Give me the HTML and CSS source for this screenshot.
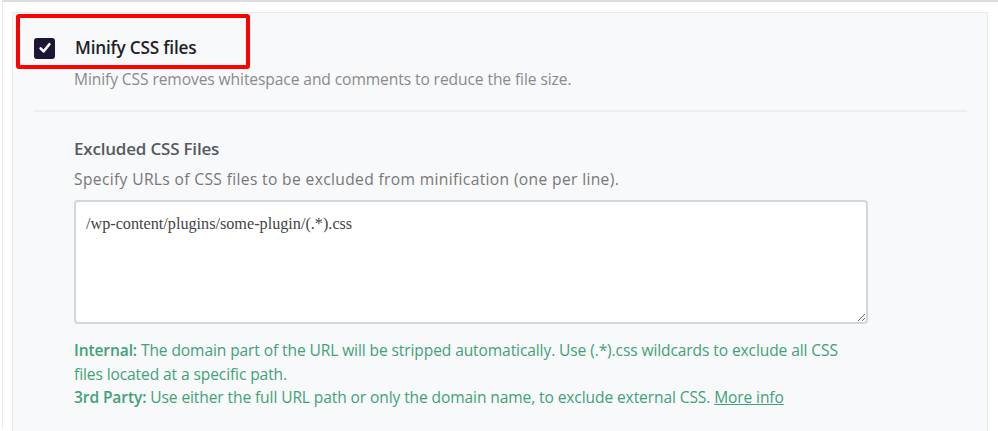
FILE: index.html
```html
<!DOCTYPE html>
<html>
<head>
<meta charset="utf-8">
<link rel="stylesheet" href="styles.css">
</head>
<body>
<div class="page">
  <div class="panel">
    <div class="option">
      <span class="check">
        <svg width="14" height="14" viewBox="0 0 14 14"><path d="M2.6 7.4 L5.6 10.4 L11.4 3.2" fill="none" stroke="#fff" stroke-width="2.6" stroke-linecap="round" stroke-linejoin="round"/></svg>
      </span>
      <span class="option-title">Minify CSS files</span>
    </div>
    <p class="option-desc">Minify CSS removes whitespace and comments to reduce the file size.</p>
    <div class="divider"></div>
    <div class="sub">
      <h3 class="sub-title">Excluded CSS Files</h3>
      <p class="sub-desc">Specify URLs of CSS files to be excluded from minification (one per line).</p>
      <textarea class="field">/wp-content/plugins/some-plugin/(.*).css</textarea>
      <div class="hint">
        <p><b>Internal:</b> The domain part of the URL will be stripped automatically. Use (.*).css wildcards to exclude all CSS files located at a specific path.</p>
        <p><b>3rd Party:</b> Use either the full URL path or only the domain name, to exclude external CSS. <a href="#">More info</a></p>
      </div>
    </div>
    <div class="highlight"></div>
  </div>
</div>
</body>
</html>
```

FILE: styles.css
```css
html, body {
  margin: 0;
  padding: 0;
  background: #ffffff;
}
body {
  font-family: "Open Sans", "Noto Sans", sans-serif;
  width: 998px;
  height: 431px;
  overflow: hidden;
}
.page {
  border-top: 2px solid #dcdcdc;
  border-left: 1px solid #ececec;
  margin-left: 2px;
  padding: 10px 10px 0 9px;
  height: 429px;
  box-sizing: border-box;
}
.panel {
  position: relative;
  background: #f8f9fa;
  border: 1px solid #e9eaeb;
  border-bottom: none;
  padding: 23px 20px 0 21px;
  height: 430px;
  box-sizing: border-box;
}
.option {
  display: flex;
  align-items: center;
  gap: 20px;
  height: 24px;
}
.check {
  width: 21px;
  height: 21px;
  border-radius: 3px;
  background: #1c1533;
  display: flex;
  align-items: center;
  justify-content: center;
}
.option-title {
  font-size: 17.2px;
  font-weight: 600;
  color: #1f1f28;
  letter-spacing: -0.2px;
  line-height: 24px;
}
.option-desc {
  margin: 8px 0 0 40px;
  font-size: 15.6px;
  color: #8a8a8a;
  line-height: 22px;
  letter-spacing: -0.1px;
}
.divider {
  height: 2px;
  background: #eceef0;
  margin-top: 20px;
}
.sub {
  padding-left: 40px;
}
.sub-title {
  margin: 25px 0 0 0;
  font-size: 17px;
  font-weight: 600;
  color: #555a5e;
  line-height: 24px;
  letter-spacing: -0.2px;
}
.sub-desc {
  margin: 7px 0 0 0;
  font-size: 15.6px;
  color: #777;
  line-height: 22px;
  letter-spacing: 0.35px;
}
.field {
  display: block;
  box-sizing: border-box;
  margin-top: 10px;
  width: 794px;
  height: 124px;
  border: 2px solid #d3d7db;
  border-radius: 4px;
  background: #fff;
  padding: 12px 10px;
  font-family: "Liberation Serif", serif;
  font-size: 16.2px;
  line-height: 20px;
  color: #444;
  resize: vertical;
  outline: none;
}
.hint {
  margin-top: 15px;
  color: #3fa276;
  font-size: 15.55px;
  line-height: 23.5px;
  width: 790px;
  letter-spacing: -0.1px;
}
.hint p {
  margin: 0;
}
.hint b {
  font-weight: 600;
}
.hint a {
  color: #3fa276;
  text-decoration: underline;
}
.highlight {
  position: absolute;
  left: 3px;
  top: 1px;
  width: 234px;
  height: 55px;
  box-sizing: border-box;
  border: 4px solid #ff0000;
  border-radius: 3px;
}
```
